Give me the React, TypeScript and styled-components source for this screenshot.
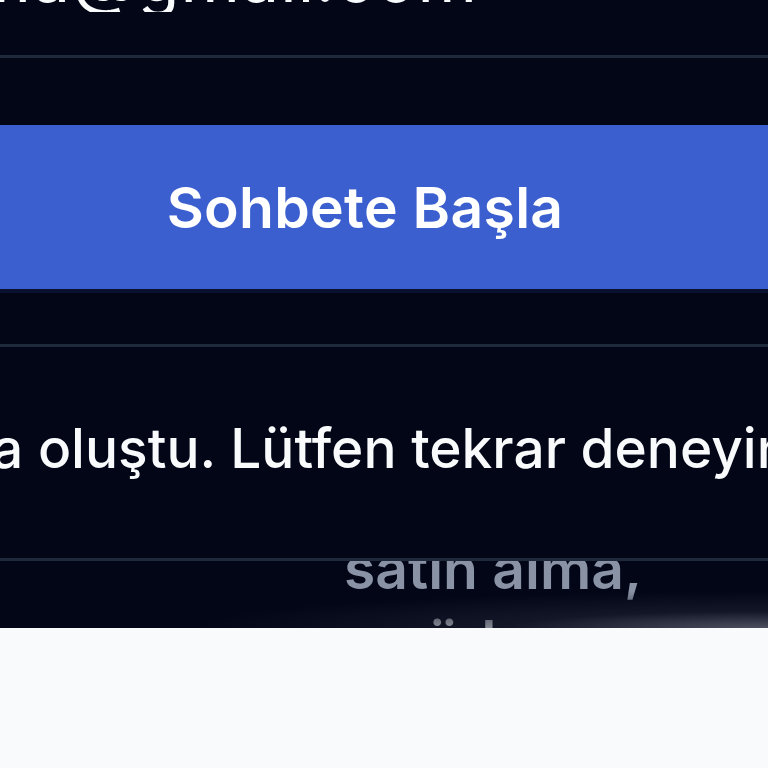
import React from 'react';
import styled, { createGlobalStyle } from 'styled-components';

const GlobalStyle = createGlobalStyle`
   html, body {
      margin: 0;
      padding: 0;
      background: #f8fafc;
   }
   * {
      box-sizing: border-box;
   }
`;

const App = (): JSX.Element => (
   <>
      <GlobalStyle />
      <Screen>
         <Dark>
            <EmailClip>
               <EmailText>ahmet.yilma@gmail.com</EmailText>
            </EmailClip>
            <Divider $top={43} />
            <ButtonWrap>
               <StartButton type="button">Sohbete Başla</StartButton>
            </ButtonWrap>
            <Divider $top={0} />
            <ErrorRow>
               <ErrorText>a oluştu. Lütfen tekrar deneyin.</ErrorText>
            </ErrorRow>
            <Divider $top={0} />
            <Scroller>
               <ScrollText>
                  satın alma,
                  <NextLine>ödeme ve</NextLine>
               </ScrollText>
               <Fade />
            </Scroller>
         </Dark>
         <Light />
      </Screen>
   </>
);

export default App;

const Screen = styled.div`
   width: 768px;
   height: 768px;
   overflow: hidden;
   display: flex;
   flex-direction: column;
   font-family: Inter, 'Noto Sans', sans-serif;
`;

const Dark = styled.div`
   background: #020617;
   display: flex;
   flex-direction: column;
   height: 628px;
   flex-shrink: 0;
`;

const EmailClip = styled.div`
   height: 12px;
   overflow: hidden;
   display: flex;
   align-items: flex-end;
   justify-content: flex-end;
   padding-right: 290px;
`;

const EmailText = styled.div`
   flex-shrink: 0;
   color: #f8fafc;
   font-size: 68px;
   line-height: 68px;
   letter-spacing: 1px;
   white-space: nowrap;
   margin-bottom: 1px;
`;

const Divider = styled.div<{ $top: number }>`
   height: 3px;
   margin-top: ${({ $top }) => $top}px;
   background: #1e293b;
   flex-shrink: 0;
`;

const ButtonWrap = styled.div`
   padding: 67px 0 55px;
`;

const StartButton = styled.button`
   display: flex;
   align-items: center;
   justify-content: center;
   width: 100%;
   height: 164px;
   border: none;
   border-radius: 0;
   background: #3b5fcf;
   color: #ffffff;
   font-family: Inter, 'Noto Sans', sans-serif;
   font-size: 57px;
   font-weight: 600;
   letter-spacing: 0.3px;
   padding: 0 38px 0 0;
   box-shadow: 0 4px 0 #0a1030;
   cursor: pointer;
`;

const ErrorRow = styled.div`
   height: 211px;
   display: flex;
   align-items: center;
   overflow: hidden;
`;

const ErrorText = styled.div`
   color: #f8fafc;
   font-size: 55px;
   font-weight: 500;
   white-space: nowrap;
   text-indent: -8px;
   padding-bottom: 10px;
`;

const Scroller = styled.div`
   flex: 1;
   position: relative;
   overflow: hidden;
`;

const ScrollText = styled.div`
   color: #8a93a5;
   font-size: 57px;
   font-weight: 600;
   line-height: 72px;
   padding-left: 344px;
   margin-top: -28px;
`;

const NextLine = styled.div`
   padding-left: 82px;
   color: #c3c8d2;
`;

const Fade = styled.div`
   position: absolute;
   inset: 0;
   background:
      radial-gradient(ellipse 75% 55% at 100% 100%, rgba(150, 152, 165, 0.5) 0%, rgba(60, 64, 80, 0.28) 45%, rgba(2, 6, 23, 0) 100%),
      linear-gradient(to bottom, rgba(2, 6, 23, 0) 45%, rgba(2, 6, 23, 0.55) 80%, rgba(2, 6, 23, 0.2) 100%),
      linear-gradient(to right, rgba(2, 6, 23, 0.7) 0%, rgba(2, 6, 23, 0) 40%);
`;

const Light = styled.div`
   flex: 1;
   background: #f8fafc;
`;
